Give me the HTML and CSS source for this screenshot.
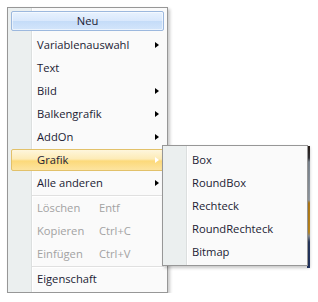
FILE: index.html
```html
<!DOCTYPE html>
<html>
<head>
<meta name="viewport" content="width=device-width, initial-scale=1">
<link rel="stylesheet" href="styles.css">
</head>
<body>

<div class="desk"></div>

<div class="menu">
  <div class="head">Neu</div>
  <div class="item">Variablenauswahl<span class="arrow"></span></div>
  <div class="item">Text</div>
  <div class="item">Bild<span class="arrow"></span></div>
  <div class="item">Balkengrafik<span class="arrow"></span></div>
  <div class="item">AddOn<span class="arrow"></span></div>
  <div class="item hot">Grafik<span class="arrow"></span>
    <!-- submenu opened from Grafik -->
    <div class="menu sub">
      <div class="item">Box</div>
      <div class="item">RoundBox</div>
      <div class="item">Rechteck</div>
      <div class="item">RoundRechteck</div>
      <div class="item">Bitmap</div>
    </div>
  </div>
  <div class="item">Alle anderen<span class="arrow"></span></div>
  <div class="sep"></div>
  <div class="item off"><span class="label">Löschen</span>Entf</div>
  <div class="item off"><span class="label">Kopieren</span>Ctrl+C</div>
  <div class="item off"><span class="label">Einfügen</span>Ctrl+V</div>
  <div class="sep"></div>
  <div class="item">Eigenschaft</div>
</div>

</body>
</html>
```

FILE: styles.css
```css
* {
  box-sizing: border-box;
}

body {
  margin: 0;
  background: #fff;
  font-family: "Open Sans", "Noto Sans", sans-serif;
  font-size: 11.2px;
  color: #1c1c34;
}

/* bit of the window behind, seen past the submenu */
.desk {
  position: absolute;
  left: 307px;
  top: 146px;
  width: 3px;
  height: 122px;
  background: linear-gradient(#2a1f18 0, #3b3a40 12px, #8f9aa6 16px, #aab2bb 54px, #c98a1a 57px, #d69a22 86px, #9aa1aa 90px, #2c3f6a 96px, #24386a 122px);
}

.menu {
  width: 161px;
  margin: 7px 0 0 7px;
  padding: 3px 0 1px 0;
  border: 1px solid #979797;
  background: linear-gradient(to right, #ebefef 0 23px, #dcdfdf 23px 24px, #fff 24px 25px, #fafafa 25px);
  box-shadow: 2px 2px 3px rgba(0, 0, 0, 0.22);
}

.head {
  height: 20px;
  margin: 0 3px 3px 3px;
  line-height: 18px;
  text-align: center;
  border: 1px solid #9cb8de;
  border-radius: 2px;
  background: linear-gradient(#e8f2fe 0%, #d9e8fc 48%, #c5dcf8 52%, #d3e5fb 100%);
  box-shadow: inset 0 0 0 1px rgba(255, 255, 255, 0.55);
}

.item {
  position: relative;
  display: flex;
  align-items: center;
  height: 22px;
  margin: 0 3px 1px 3px;
  padding-left: 25px;
  padding-bottom: 1px;
  border: 1px solid transparent;
  border-radius: 2px;
}

.item.hot {
  border-color: #e2c16a;
  background: linear-gradient(#fef6dc 0%, #fdebb6 45%, #fcd97a 55%, #fde4a0 100%);
}

.item.off {
  color: #a2a2a2;
}

.label {
  width: 62px;
}

.arrow {
  position: absolute;
  right: 4px;
  top: 7px;
  width: 0;
  height: 0;
  border-left: 4px solid #000;
  border-top: 3.5px solid transparent;
  border-bottom: 3.5px solid transparent;
}

.hot .arrow {
  border-left-color: #fff;
}

.sep {
  height: 2px;
  margin: 0 3px 0 24px;
  border-top: 1px solid #e0e0e0;
  border-bottom: 1px solid #fff;
}

.menu.sub {
  position: absolute;
  left: 150px;
  top: -5px;
  width: 146px;
  margin: 0;
  padding: 3px 0 1px 0;
  color: #1c1c34;
}
```
